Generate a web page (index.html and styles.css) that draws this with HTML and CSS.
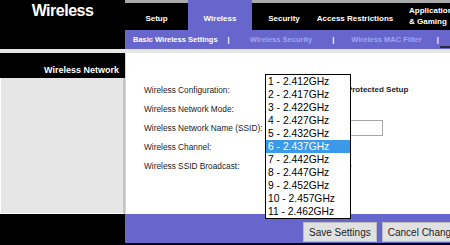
FILE: index.html
```html
<!DOCTYPE html>
<html lang="en">
<head>
  <meta charset="UTF-8">
  <meta name="viewport" content="width=device-width, initial-scale=1.0">
  <title>Wireless - Basic Wireless Settings</title>
  <link rel="stylesheet" href="styles.css">
</head>
<body>
  <div class="page">
    <div class="top">
      <div class="brand"><h1>Wireless</h1></div>
      <div class="nav">
        <div class="tabs">
          <div class="tab tab-setup">Setup</div>
          <div class="tab tab-wireless active">Wireless</div>
          <div class="tab tab-security">Security</div>
          <div class="tab tab-access">Access Restrictions</div>
          <div class="tab tab-apps">Applications<br>&amp; Gaming</div>
        </div>
        <div class="subnav">
          <span class="sub-link current">Basic Wireless Settings</span>
          <span class="sep sep-a">|</span>
          <span class="sub-link">Wireless Security</span>
          <span class="sep sep-b">|</span>
          <span class="sub-link">Wireless MAC Filter</span>
          <span class="sep sep-c">|</span>
          <span class="sub-end"></span>
        </div>
      </div>
    </div>

    <div class="band"></div>

    <div class="main">
      <div class="side">
        <div class="side-title">Wireless Network</div>
        <div class="side-body"></div>
      </div>
      <div class="content">
        <div class="form">
          <div class="label">Wireless Configuration:</div>
          <div class="control">
            <span class="radio"></span>
            <span class="opt">Manual</span>
            <span class="radio on"></span>
            <span class="opt strong">Wi-Fi Protected Setup</span>
          </div>

          <div class="label">Wireless Network Mode:</div>
          <div class="control"><span class="select">Mixed</span></div>

          <div class="label">Wireless Network Name (SSID):</div>
          <div class="control"><span class="text-input"></span></div>

          <div class="label">Wireless Channel:</div>
          <div class="control"><span class="select">6 - 2.437GHz</span></div>

          <div class="label">Wireless SSID Broadcast:</div>
          <div class="control">
            <span class="radio on"></span>
            <span class="opt">Enable</span>
            <span class="radio"></span>
            <span class="opt">Disable</span>
          </div>
        </div>

        <ul class="channel-list">
          <li>1 - 2.412GHz</li>
          <li>2 - 2.417GHz</li>
          <li>3 - 2.422GHz</li>
          <li>4 - 2.427GHz</li>
          <li>5 - 2.432GHz</li>
          <li class="selected">6 - 2.437GHz</li>
          <li>7 - 2.442GHz</li>
          <li>8 - 2.447GHz</li>
          <li>9 - 2.452GHz</li>
          <li>10 - 2.457GHz</li>
          <li>11 - 2.462GHz</li>
        </ul>
      </div>
    </div>

    <div class="footer">
      <div class="footer-side"></div>
      <div class="footer-bar">
        <button class="btn" type="button">Save Settings</button>
        <button class="btn" type="button">Cancel Changes</button>
      </div>
    </div>
  </div>
</body>
</html>
```

FILE: styles.css
```css
* {
  box-sizing: border-box;
}
body {
  margin: 0;
  background-color: #000000;
  font-family: "Liberation Sans", Arial, sans-serif;
}
.page {
  width: 450px;
  height: 245px;
  overflow: hidden;
}

/* header */
.top {
  display: flex;
  height: 49px;
}
.brand {
  width: 125px;
  flex-shrink: 0;
  background-color: #000000;
}
.brand h1 {
  margin: 0;
  padding-top: 2px;
  text-align: center;
  color: #ffffff;
  font-size: 16px;
  letter-spacing: -0.5px;
  font-weight: bold;
}
.nav {
  flex: 1;
  min-width: 0;
  display: flex;
  flex-direction: column;
}
.tabs {
  display: flex;
  height: 30px;
  overflow: hidden;
  background-color: #000000;
}
.tab {
  flex-shrink: 0;
  height: 30px;
  padding-top: 3px;
  border-top: 3px solid #a9a9a9;
  display: flex;
  align-items: center;
  justify-content: center;
  color: #ffffff;
  font-size: 8px;
  font-weight: bold;
  white-space: nowrap;
}
.tab.active {
  background-color: #6666cc;
  border-top-color: #6666cc;
}
.tab-setup { width: 63px; }
.tab-wireless { width: 64px; }
.tab-security { width: 64px; }
.tab-access { width: 78px; }
.tab-apps {
  width: 70px;
  padding: 0 0 0 15px;
  justify-content: flex-start;
  line-height: 10.5px;
}
.subnav {
  height: 19px;
  display: flex;
  align-items: center;
  padding-left: 8px;
  background-color: #6666cc;
  font-size: 7.5px;
  font-weight: bold;
  white-space: nowrap;
  overflow: hidden;
}
.sub-link {
  color: #a4a4ee;
}
.sub-link.current {
  color: #ffffff;
}
.sep {
  color: #ffffff;
}
.sep-a { margin: 0 20px 0 10px; }
.sep-b { margin: 0 17px 0 20px; }
.sep-c { margin: 0 0 0 15px; }
.sub-end {
  flex: 1;
  align-self: flex-end;
  height: 2px;
  margin: 0 0 1px 1px;
  background-color: #2a2a3a;
}
.band {
  height: 4px;
  background-color: #e6e6e6;
}

/* body */
.main {
  display: flex;
  height: 161px;
}
.side {
  width: 125px;
  flex-shrink: 0;
  display: flex;
  flex-direction: column;
}
.side-title {
  height: 25px;
  display: flex;
  align-items: flex-end;
  justify-content: flex-end;
  padding: 0 6px 3px 0;
  background-color: #000000;
  color: #ffffff;
  font-size: 9px;
  font-weight: bold;
}
.side-body {
  flex: 1;
  background-color: #e6e6e6;
  border-left: 1px solid #ffffff;
  border-bottom: 1px solid #ffffff;
  border-right: 2px solid #c4c4c4;
}
.content {
  flex: 1;
  position: relative;
  padding: 27px 0 0 18px;
  background-color: #ffffff;
  border-left: 1px solid #d6d6d6;
}
.form {
  display: grid;
  grid-template-columns: 121px auto;
  grid-auto-rows: 19.2px;
  align-items: center;
  font-size: 8.3px;
  color: #222222;
}
.control {
  display: flex;
  align-items: center;
  gap: 3px;
  white-space: nowrap;
}
.radio {
  width: 10px;
  height: 10px;
  border: 1px solid #8a8a8a;
  border-radius: 50%;
  background-color: #ffffff;
}
.radio.on {
  margin-left: 4px;
  background: radial-gradient(circle, #333333 35%, #ffffff 40%);
}
.opt.strong {
  font-size: 8px;
  font-weight: bold;
}
.select {
  width: 80px;
  height: 15px;
  padding-left: 2px;
  border: 1px solid #a6a6a6;
  line-height: 13px;
}
.text-input {
  display: block;
  width: 118px;
  height: 16px;
  border: 1px solid #a6a6a6;
  background-color: #ffffff;
}

/* open channel dropdown */
.channel-list {
  position: absolute;
  left: 139px;
  top: 21px;
  z-index: 5;
  width: 86px;
  margin: 0;
  padding: 0;
  list-style: none;
  background-color: #ffffff;
  border: 1px solid #000000;
  font-size: 10.3px;
  line-height: 13px;
  color: #000000;
}
.channel-list li {
  height: 13px;
  padding-left: 2px;
  white-space: nowrap;
}
.channel-list li.selected {
  background-color: #3a9ae8;
  color: #ffffff;
}

/* footer */
.footer {
  display: flex;
  height: 29px;
}
.footer-side {
  width: 125px;
  flex-shrink: 0;
  background-color: #000000;
}
.footer-bar {
  flex: 1;
  display: flex;
  gap: 5px;
  padding: 8px 0 0 178px;
  background-color: #6666cc;
  overflow: hidden;
}
.btn {
  flex-shrink: 0;
  height: 20px;
  padding: 0 5px;
  background-color: #e1e1e1;
  border: 1px solid #bdbdbd;
  color: #222222;
  font-family: "Liberation Sans", Arial, sans-serif;
  font-size: 10px;
  white-space: nowrap;
}
```
